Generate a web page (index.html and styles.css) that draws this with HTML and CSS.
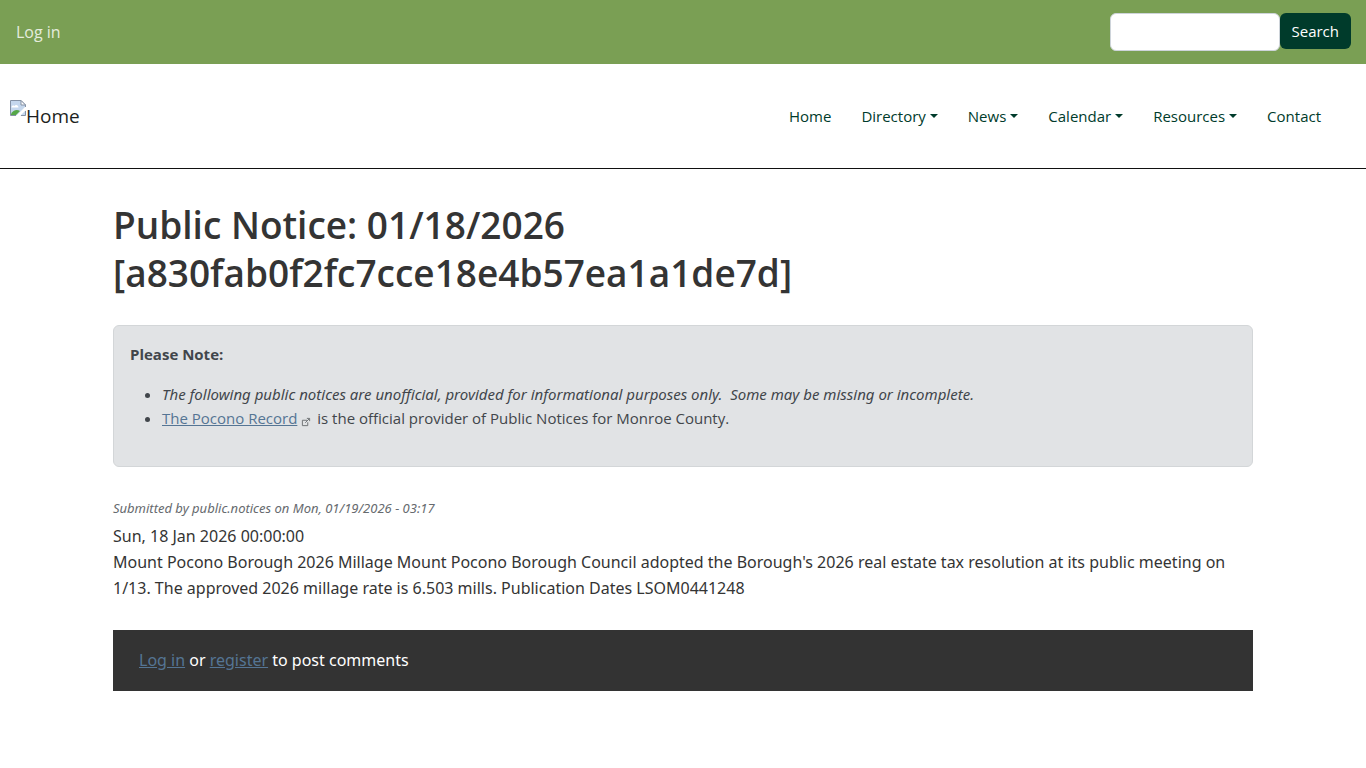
FILE: index.html
```html
<!DOCTYPE html>
<html lang="en">
<head>
    <meta charset="UTF-8">
    <meta name="viewport" content="width=device-width, initial-scale=1.0">
    <title>Public Notice: 01/18/2026</title>
    <link rel="stylesheet" href="styles.css">
</head>
<body>
    <header>
        <div class="top-bar">
            <a class="login-link" href="#">Log in</a>
            <form class="search-form">
                <input class="search-input" type="search" aria-label="Search">
                <button class="search-button" type="submit">Search</button>
            </form>
        </div>
        <nav class="navbar">
            <a class="brand" href="#">
                <svg class="brand-icon" width="16" height="16" viewBox="0 0 16 16" aria-hidden="true">
                    <path d="M0.5 15.500V0.500H11L15.500 5V15.500Z" fill="#c5d7ed"/>
                    <path d="M1.500 7.500c0-2 2-2.500 3-1.500 1-2 4-1 4 1.500z" fill="#fff"/>
                    <path d="M1 15v-1c2-4 6-5 9-3l-4 4z" fill="#55a747"/>
                    <path d="M6 16 16 6v4l-6 6z" fill="#fff"/>
                    <path d="M0.500 15.500V0.500H11L15.500 5v2" fill="none" stroke="#8592a5"/>
                    <path d="M11 0.500V5h4.500z" fill="#fff" stroke="#8592a5"/>
                    <path d="M0.500 15.500H6M11 15.500h4.500V11" fill="none" stroke="#8592a5"/>
                </svg>
                <span>Home</span>
            </a>
            <ul class="menu">
                <li><a href="#">Home</a></li>
                <li><a class="dropdown" href="#">Directory</a></li>
                <li><a class="dropdown" href="#">News</a></li>
                <li><a class="dropdown" href="#">Calendar</a></li>
                <li><a class="dropdown" href="#">Resources</a></li>
                <li><a href="#">Contact</a></li>
            </ul>
        </nav>
    </header>

    <main class="container">
        <h1>Public Notice: 01/18/2026 [a830fab0f2fc7cce18e4b57ea1a1de7d]</h1>

        <div class="alert">
            <p><strong>Please Note:</strong></p>
            <ul>
                <li><em>The following public notices are unofficial, provided for informational purposes only.&nbsp; Some may be missing or incomplete.</em></li>
                <li><a href="#">The Pocono Record</a><svg class="ext" width="10" height="10" viewBox="0 0 80 80" role="img" aria-label="(link is external)"><path d="M48 26H11v43h43V42M34 46 67 13M47 11h22v22" fill="none" stroke="#727678" stroke-width="8"/></svg> is the official provider of Public Notices for Monroe County.</li>
            </ul>
        </div>

        <article>
            <footer class="submitted">Submitted by public.notices on Mon, 01/19/2026 - 03:17</footer>
            <div class="notice">
                <div>Sun, 18 Jan 2026 00:00:00</div>
                <div>Mount Pocono Borough 2026 Millage Mount Pocono Borough Council adopted the Borough's 2026 real estate tax resolution at its public meeting on 1/13. The approved 2026 millage rate is 6.503 mills. Publication Dates LSOM0441248</div>
            </div>
            <div class="comment-links">
                <a href="#">Log in</a> or <a href="#">register</a> to post comments
            </div>
        </article>
    </main>
</body>
</html>
```
FILE: styles.css
```css
* {
    box-sizing: border-box;
}

body {
    margin: 0;
    background: #fff;
    color: #343434;
    font-family: "Segoe UI", "Open Sans", "Noto Sans", sans-serif;
    font-size: 15px;
    line-height: 24px;
}

/* Green bar with the login link and search */
.top-bar {
    display: flex;
    align-items: center;
    justify-content: space-between;
    min-height: 64px;
    padding: 0 15px 0 16px;
    background: #7a9f54;
}

.login-link {
    color: #e5ecdd;
    font-size: 16px;
    text-decoration: none;
}

.search-form {
    display: flex;
    align-items: flex-start;
}

.search-input {
    width: 170px;
    height: 38px;
    padding: 6px 12px;
    border: 1px solid #ced4da;
    border-radius: 6px;
    background: #fff;
    font: inherit;
}

.search-button {
    height: 36px;
    padding: 0 12px;
    border: 0;
    border-radius: 6px;
    background: #003b2b;
    color: #fff;
    font: inherit;
    cursor: pointer;
}

/* Main navigation */
.navbar {
    display: flex;
    align-items: center;
    justify-content: space-between;
    min-height: 105px;
    padding: 0 45px 0 10px;
    border-bottom: 1px solid #111;
}

.brand {
    display: flex;
    align-items: flex-start;
    color: #1c1f21;
    font-size: 19px;
    line-height: 32px;
    text-decoration: none;
}

.menu {
    display: flex;
    gap: 30px;
    margin: 0;
    padding: 0;
    list-style: none;
}

.menu a {
    color: #003b2b;
    text-decoration: none;
}

.dropdown::after {
    content: "";
    display: inline-block;
    margin-left: 4px;
    vertical-align: 4px;
    border-top: 4px solid;
    border-right: 4px solid transparent;
    border-left: 4px solid transparent;
}

/* Page content */
.container {
    max-width: 1164px;
    margin: 0 auto;
    padding: 32px 12px;
}

h1 {
    max-width: 760px;
    margin: 0 0 28px;
    font-size: 37px;
    font-weight: 600;
    line-height: 48px;
}

.alert {
    padding: 16px;
    border: 1px solid #d3d6d8;
    border-radius: 6px;
    background: #e1e3e5;
    color: #41464b;
}

.alert p {
    margin: 0 0 16px;
}

.alert ul {
    margin: 0 0 20px;
    padding-left: 32px;
}

.alert em,
.submitted,
.notice,
.comment-links {
    font-family: "Segoe UI", "Noto Sans", "Open Sans", sans-serif;
}

.alert a {
    color: #557594;
}

.ext {
    margin: 0 2px 0 4px;
    vertical-align: -3px;
}

.submitted {
    margin: 29px 0 3px;
    color: #666a6e;
    font-size: 13px;
    font-style: italic;
}

.notice {
    font-size: 16px;
    line-height: 26px;
}

.comment-links {
    margin-top: 29px;
    padding: 18px 26px;
    background: #333;
    color: #fff;
    font-size: 16px;
    line-height: 25px;
}

.comment-links a {
    color: #557594;
}
```
